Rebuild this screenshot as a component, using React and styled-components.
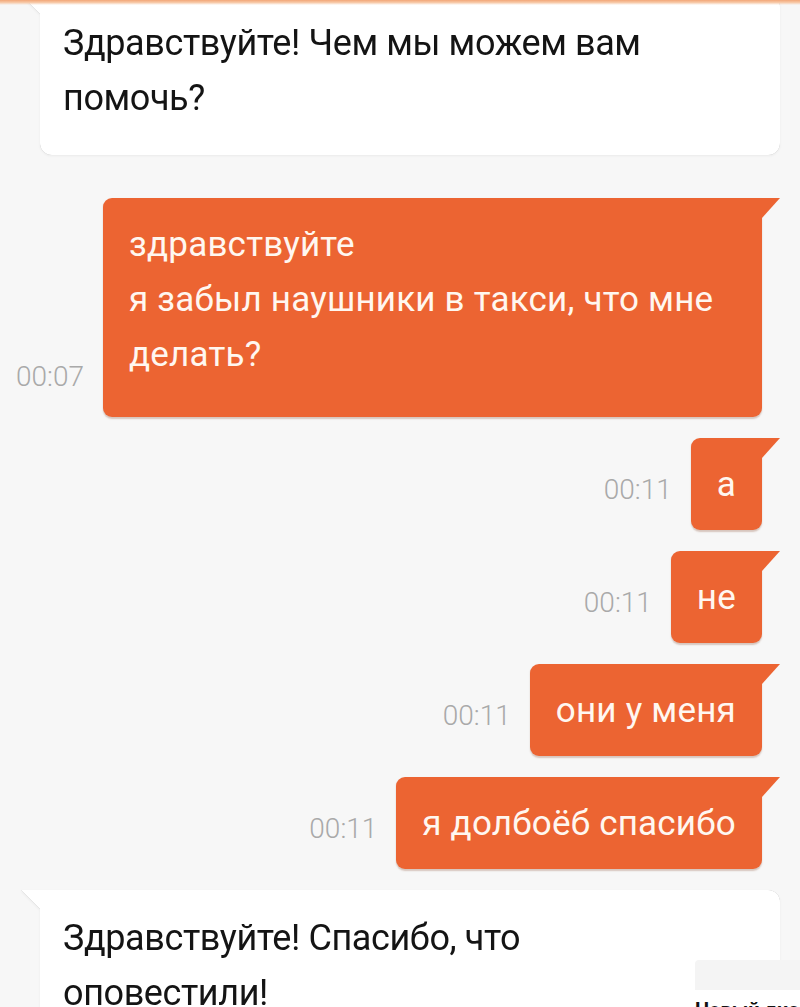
import React from "react";
import styled, { createGlobalStyle } from "styled-components";

const GlobalStyle = createGlobalStyle`
  html, body { margin: 0; padding: 0; background: #f7f7f7; }
  body { font-family: Roboto, "Noto Sans", Arial, sans-serif; overflow: hidden; }
`;

const ORANGE = "#ec6432";

const Screen = styled.div`
  position: relative;
  width: 800px;
  height: 1007px;
  overflow: hidden;
  background: #f7f7f7;
`;

const TopEdge = styled.div`
  position: absolute;
  top: 0;
  left: 0;
  right: 0;
  height: 5px;
  background: linear-gradient(to bottom, #f3a677 0%, #f7c9a8 50%, rgba(247, 247, 247, 0) 100%);
  z-index: 2;
`;

const Thread = styled.div`
  display: flex;
  flex-direction: column;
  gap: 21px;
`;

const Incoming = styled.div`
  position: relative;
  margin: ${(p) => p.$top}px 20px 0 40px;
  padding: 21px 100px 29px 23px;
  background: #ffffff;
  border-radius: 0 12px 12px 12px;
  filter: drop-shadow(0 0 0.6px rgba(0, 0, 0, 0.28)) drop-shadow(0 1px 1px rgba(0, 0, 0, 0.05));
  font-size: 36px;
  line-height: 55px;
  color: #141414;
  letter-spacing: -0.4px;

  &::before {
    content: "";
    position: absolute;
    top: 0;
    left: -19px;
    width: 20px;
    height: 20px;
    background: #ffffff;
    clip-path: polygon(0 0, 100% 0, 100% 100%);
  }
`;

const OutRow = styled.div`
  display: flex;
  justify-content: flex-end;
  align-items: flex-end;
  gap: 19px;
  padding: 0 38px 0 16px;
  margin-top: ${(p) => p.$top || 0}px;
`;

const Time = styled.span`
  flex: none;
  margin-bottom: 27px;
  font-size: 28px;
  line-height: 26px;
  font-weight: 300;
  color: #a9a9a9;
`;

const OutBubble = styled.div`
  position: relative;
  max-width: 660px;
  box-sizing: border-box;
  padding: 19px 26px ${(p) => p.$bottom}px 26px;
  background: ${ORANGE};
  color: #fff7f0;
  border-radius: 9px 0 9px 9px;
  box-shadow: 0 1.5px 1.5px rgba(120, 50, 20, 0.25);
  font-size: 35px;
  line-height: 55px;
  letter-spacing: 0.2px;

  &::after {
    content: "";
    position: absolute;
    top: 0;
    right: -18px;
    width: 18px;
    height: 20px;
    background: ${ORANGE};
    clip-path: polygon(0 0, 100% 0, 0 100%);
  }
`;

const Hint = styled.div`
  position: absolute;
  right: 0;
  bottom: 0;
  width: 105px;
  height: 47px;
  background: #ffffff;
  border-top-left-radius: 4px;
  overflow: hidden;
  z-index: 2;
`;

const HintShade = styled.div`
  height: 30px;
  background: #f4f4f4;
`;

const HintText = styled.div`
  margin-top: 10px;
  font-size: 20px;
  line-height: 20px;
  font-weight: 700;
  color: #111;
  white-space: nowrap;
`;

const outgoing = [
  { time: "00:11", text: "а" },
  { time: "00:11", text: "не" },
  { time: "00:11", text: "они у меня" },
  { time: "00:11", text: "я долбоёб спасибо" },
];

export default function App() {
  return (
    <Screen>
      <GlobalStyle />
      <TopEdge />
      <Thread>
        <Incoming $top={-5}>Здравствуйте! Чем мы можем вам помочь?</Incoming>
        <OutRow $top={22}>
          <Time>00:07</Time>
          <OutBubble $bottom={35}>
            здравствуйте
            <br />я забыл наушники в такси, что мне делать?
          </OutBubble>
        </OutRow>
        {outgoing.map((m, i) => (
          <OutRow key={i}>
            <Time>{m.time}</Time>
            <OutBubble $bottom={18}>{m.text}</OutBubble>
          </OutRow>
        ))}
        <Incoming $top={0}>Здравствуйте! Спасибо, что оповестили!</Incoming>
      </Thread>
      <Hint>
        <HintShade />
        <HintText>Новый диалог</HintText>
      </Hint>
    </Screen>
  );
}
